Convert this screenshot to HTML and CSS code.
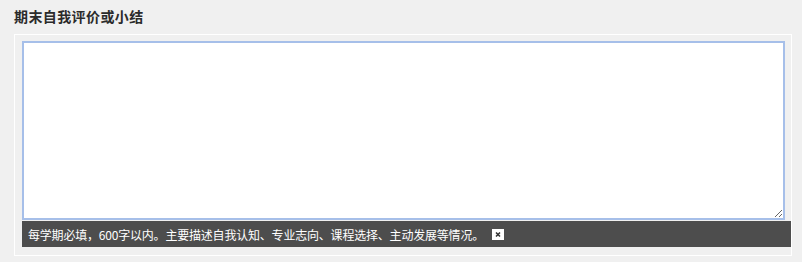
FILE: index.html
```html
<!DOCTYPE html>
<html lang="zh-CN">
<head>
    <meta charset="UTF-8">
    <title>期末自我评价或小结</title>
    <link rel="stylesheet" href="styles.css">
</head>
<body>
    <div class="section-title">期末自我评价或小结</div>
    <div class="panel">
        <textarea class="summary-input" autofocus></textarea>
        <div class="hint-bar">
            <span class="hint-text">每学期必填，600字以内。主要描述自我认知、专业志向、课程选择、主动发展等情况。</span>
            <span class="hint-close">
                <svg width="12" height="11" viewBox="0 0 12 11">
                    <rect width="12" height="11" fill="#fff"/>
                    <path d="M4 3.5 L8 7.5 M8 3.5 L4 7.5" stroke="#333" stroke-width="1.6"/>
                </svg>
            </span>
        </div>
    </div>
</body>
</html>
```

FILE: styles.css
```css
body {
    margin: 0;
    padding: 0;
    background-color: #f0f0f0;
    font-family: "Microsoft YaHei", "Noto Sans CJK SC", sans-serif;
    color: #333;
}

.section-title {
    padding: 6px 0 0 14px;
    height: 22px;
    line-height: 20px;
    margin-bottom: 6px;
    font-size: 14px;
    font-weight: bold;
    letter-spacing: 0.4px;
    color: #2b2b2b;
}

.panel {
    margin: 0 10px 0 14px;
    border: 1px solid #fff;
    padding: 6px 0 8px 7px;
}

.summary-input {
    display: block;
    box-sizing: border-box;
    width: calc(100% - 6px);
    height: 179px;
    margin: 0;
    padding: 4px;
    border: 2px solid #a6bfe9;
    outline: none;
    background-color: #fff;
    font-family: inherit;
    font-size: 12px;
}

.hint-bar {
    display: flex;
    align-items: center;
    gap: 8px;
    height: 26px;
    margin-top: 1px;
    padding-left: 6px;
    background-color: #4d4d4d;
    color: #fff;
    font-size: 12px;
}

.hint-text {
    letter-spacing: -0.2px;
}

.hint-close {
    display: flex;
}
```
